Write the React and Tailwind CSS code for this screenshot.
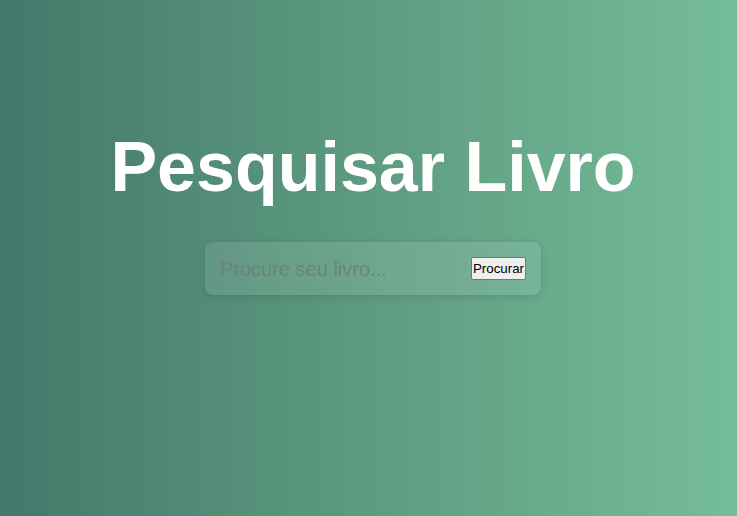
export default function App() {
  return (
    <div
      className="w-full h-[516px] bg-gradient-to-r from-[#43786a] via-[#5e9b81] to-[#75bd99] flex flex-col items-center pt-[132px] pl-[9px]"
      style={{ fontFamily: '"Liberation Sans", Arial, sans-serif' }}
    >
      <h1 className="text-[70px] leading-none font-bold text-white">Pesquisar Livro</h1>

      <div className="mt-[40px] w-[336px] h-[53px] rounded-lg bg-white/10 shadow-[0_2px_8px_rgba(0,0,0,0.12)] flex items-center pl-[15px] pr-[15px]">
        <input
          type="text"
          placeholder="Procure seu livro..."
          className="flex-1 min-w-0 bg-transparent outline-none text-[20px] text-white placeholder:text-[#6a8578]"
        />
        <button className="h-[23px] px-px bg-[#efefef] border border-[#767676] rounded-[2px] text-[13.33px] text-black leading-none">
          Procurar
        </button>
      </div>
    </div>
  );
}
